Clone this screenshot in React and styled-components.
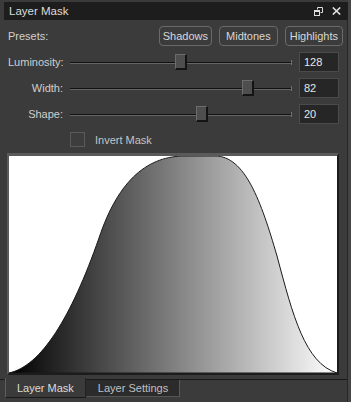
import React from 'react'
import styled, { createGlobalStyle } from 'styled-components'

const GlobalStyle = createGlobalStyle`
  html, body {
    margin: 0;
    padding: 0;
    background: #3b3b3b;
  }
  * { box-sizing: border-box; }
`

const Window = styled.div`
  width: 351px;
  height: 402px;
  background: #3b3b3b;
  display: flex;
  flex-direction: column;
  overflow: hidden;
  font-family: "Liberation Sans", Arial, sans-serif;
  font-size: 11px;
  color: #cfcfcf;
  border-right: 3px solid #454545;
`

const TitleBar = styled.div`
  height: 18px;
  margin: 2px -3px 0 4px;
  padding: 0 10px 0 5px;
  background: #1d1d1d;
  display: flex;
  align-items: center;
  justify-content: space-between;
`

const Title = styled.span`
  font-size: 11.5px;
  color: #dcdcdc;
`

const TitleIcons = styled.div`
  display: flex;
  align-items: center;
  gap: 9px;
`

const Body = styled.div`
  flex: 1;
  display: flex;
  flex-direction: column;
  border-right: 1px solid #262626;
`

const PresetRow = styled.div`
  height: 20px;
  margin-top: 6px;
  padding: 0 4px 0 8px;
  display: flex;
  align-items: center;
`

const PresetLabel = styled.span`
  flex: 1;
`

const Buttons = styled.div`
  display: flex;
  gap: 7px;
`

const PresetButton = styled.button`
  height: 20px;
  padding: 0 ${p => p.$pad}px;
  border: 1px solid #6a6a6a;
  border-radius: 4px;
  background: #3b3b3b;
  color: #d8d8d8;
  font: inherit;
`

const SliderRow = styled.div`
  height: 20px;
  margin-top: 6px;
  padding-left: 8px;
  display: flex;
  align-items: center;
`

const SliderLabel = styled.span`
  width: 55px;
  text-align: right;
  margin-right: 7px;
`

const Track = styled.div`
  position: relative;
  width: 222px;
  height: 20px;
  display: flex;
  align-items: center;
`

const Groove = styled.div`
  width: 100%;
  height: 2px;
  border-top: 1px solid #101010;
  border-bottom: 1px solid #666;
  margin-top: 1px;
`

const EndTick = styled.div`
  position: absolute;
  right: 0;
  top: 8px;
  width: 1px;
  height: 5px;
  background: #707070;
`

const Thumb = styled.div`
  position: absolute;
  top: 2px;
  width: 12px;
  height: 16px;
  background: #4e4e4e;
  border-top: 1px solid #6c6c6c;
  border-left: 1px solid #6c6c6c;
  border-right: 2px solid #141414;
  border-bottom: 2px solid #141414;
`

const ValueBox = styled.div`
  width: 40px;
  height: 20px;
  margin-left: 7px;
  padding: 3px 0 0 4px;
  background: #262626;
  border: 1px solid #4b4b4b;
  color: #e6e6e6;
  font-size: 11px;
`

const CheckRow = styled.label`
  margin-top: 8px;
  height: 15px;
  padding-left: 70px;
  display: flex;
  align-items: center;
  gap: 10px;
  color: #c4c4c4;
`

const CheckBox = styled.span`
  width: 15px;
  height: 15px;
  border: 1px solid #5a5a5a;
  background: #3d3d3d;
`

const MaskPanel = styled.div`
  margin: 6px 0 0 7px;
  width: 332px;
  height: 222px;
  border-top: 3px solid #5a5a5a;
  border-left: 2px solid #5a5a5a;
  border-right: 2px solid #1c1c1c;
  border-bottom: 2px solid #1c1c1c;
  background: #fff;
  display: flex;
`

const TabBar = styled.div`
  margin-top: 4px;
  border-top: 1px solid #1a1a1a;
  padding-left: 5px;
  display: flex;
  align-items: flex-start;
`

const Tab = styled.div`
  height: ${p => (p.$active ? 20 : 17)}px;
  margin-top: ${p => (p.$active ? -2 : 0)}px;
  padding: 0 11px;
  display: flex;
  align-items: center;
  background: ${p => (p.$active ? '#3b3b3b' : '#2b2b2b')};
  color: ${p => (p.$active ? '#dcdcdc' : '#c0c0c0')};
  border-left: 1px solid ${p => (p.$active ? '#5e5e5e' : 'transparent')};
  border-right: 1px solid ${p => (p.$active ? '#222' : '#5a5a5a')};
  border-bottom: 1px solid ${p => (p.$active ? '#1a1a1a' : '#555')};
`

const RestoreIcon = () => (
  <svg width="9" height="9" viewBox="0 0 9 9">
    <path d="M3.5 0.5h5v5h-2" fill="none" stroke="#ddd" strokeWidth="1" />
    <path d="M3.5 0.5v2" fill="none" stroke="#ddd" strokeWidth="1" />
    <rect x="0.5" y="3.5" width="5" height="5" fill="none" stroke="#ddd" strokeWidth="1" />
    <rect x="0" y="3" width="6" height="2" fill="#ddd" />
  </svg>
)

const CloseIcon = () => (
  <svg width="9" height="8" viewBox="0 0 9 8">
    <path d="M0.8 0.5L8.2 7.5M8.2 0.5L0.8 7.5" stroke="#e2e2e2" strokeWidth="1.6" />
  </svg>
)

const Slider = ({ label, value, min, max }) => {
  const frac = (value - min) / (max - min)
  const left = Math.round(frac * (222 - 12))
  return (
    <SliderRow>
      <SliderLabel>{label}</SliderLabel>
      <Track>
        <Groove />
        <EndTick />
        <Thumb style={{ left }} />
      </Track>
      <ValueBox>{value}</ValueBox>
    </SliderRow>
  )
}

const MaskCurve = () => (
  <svg width="328" height="217" viewBox="0 0 328 217">
    <defs>
      <linearGradient id="maskFill" x1="0" y1="0" x2="1" y2="0">
        <stop offset="0" stopColor="#000" />
        <stop offset="1" stopColor="#fff" />
      </linearGradient>
    </defs>
    <path
      d="M0 217 C 32 210 62 162 90 82 C 110 22 140 0 176 0 L 206 0 C 236 0 252 45 268 100 C 284 160 296 207 328 217 Z"
      fill="url(#maskFill)"
      stroke="#1a1a1a"
      strokeWidth="1"
    />
  </svg>
)

const App = () => (
  <>
    <GlobalStyle />
    <Window>
      <TitleBar>
        <Title>Layer Mask</Title>
        <TitleIcons>
          <RestoreIcon />
          <CloseIcon />
        </TitleIcons>
      </TitleBar>
      <Body>
        <PresetRow>
          <PresetLabel>Presets:</PresetLabel>
          <Buttons>
            <PresetButton $pad={3}>Shadows</PresetButton>
            <PresetButton $pad={6}>Midtones</PresetButton>
            <PresetButton $pad={4}>Highlights</PresetButton>
          </Buttons>
        </PresetRow>
        <Slider label="Luminosity:" value={128} min={0} max={255} />
        <Slider label="Width:" value={82} min={0} max={100} />
        <Slider label="Shape:" value={20} min={-100} max={100} />
        <CheckRow>
          <CheckBox />
          Invert Mask
        </CheckRow>
        <MaskPanel>
          <MaskCurve />
        </MaskPanel>
        <TabBar>
          <Tab $active>Layer Mask</Tab>
          <Tab>Layer Settings</Tab>
        </TabBar>
      </Body>
    </Window>
  </>
)

export default App
